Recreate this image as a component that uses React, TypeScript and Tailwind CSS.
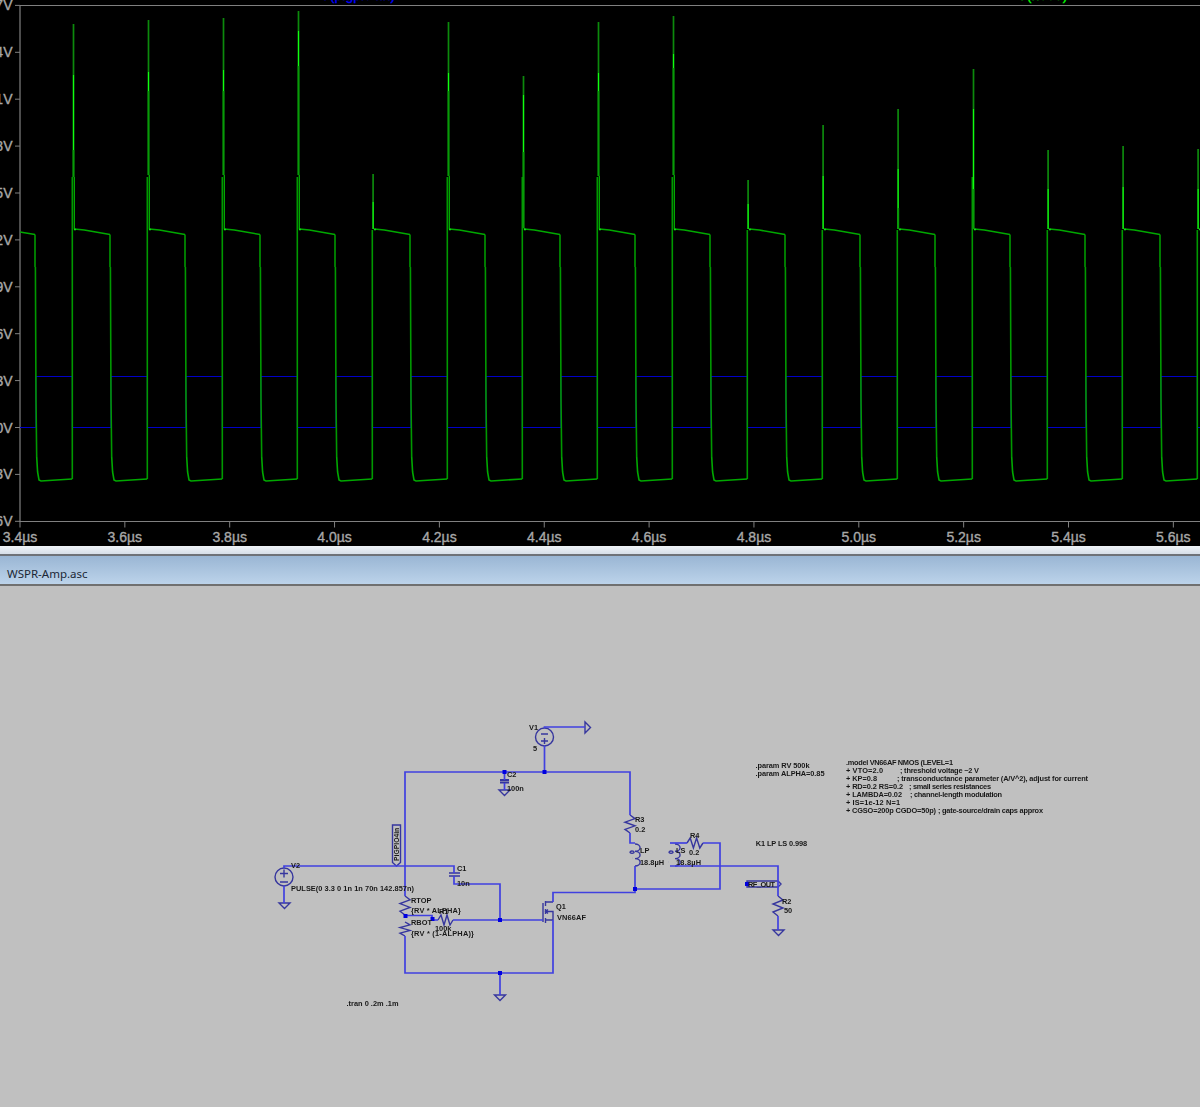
import React from "react";

const FONT = "'Liberation Sans', Arial, sans-serif";
const spikes: [number, number, number, number][] = [
  [24, 75, 150, 177], [20, 72, 91, 175], [18, 70, 91, 175], [11, 31, 66, 175],
  [174, 202, 229, 229], [22, 73, 91, 176], [76, 95, 152, 228], [22, 73, 91, 176],
  [16, 54, 68, 175], [180, 204, 229, 229], [125, 176, 229, 229], [109, 169, 208, 229],
  [69, 109, 189, 229], [150, 189, 229, 229], [146, 187, 229, 229], [149, 189, 229, 229],
];
const yLabels = ["27V", "24V", "21V", "18V", "15V", "12V", "9V", "6V", "3V", "0V", "-3V", "-6V"];
const xLabels = ["3.4µs", "3.6µs", "3.8µs", "4.0µs", "4.2µs", "4.4µs", "4.6µs", "4.8µs", "5.0µs", "5.2µs", "5.4µs", "5.6µs"];

function Waveform() {
  const X0 = 72.3;
  const P = 75;
  const blue: string[] = [];
  const green: string[] = [];
  const low: string[] = [];
  const rise: string[] = [];
  blue.push(`M20 427.5H${X0 - P + 37.7 + 0.9}`);
  green.push(`M20 232L35 234.5`);
  for (let i = -1; i < 16; i++) {
    const r = X0 + P * i;
    const f = r + 37.7;
    if (i >= 0) {
      blue.push(`M${r} 376.5V427.5H${f + 0.9}`);
      green.push(`M${r + 2} 229L${r + 12} 230L${f} 234.5`);
      const big = spikes[i][0] < 100;
      rise.push(`M${r} 479V${big ? 177 : 230}`);
    }
    blue.push(`M${f + 0.9} 427.5V376.5H${f + P - 37.7}`);
    low.push(`M${f} 234.5V267`);
    rise.push(`M${f + 0.4} 267L${f + 1} 400L${f + 1.7} 457`);
    green.push(`M${f + 1.7} 457L${f + 2.6} 472L${f + 4} 480L${f + 6} 481L${f + 37.2} 479`);
  }
  return (
    <>
      <path d={blue.join("")} stroke="#0000c8" strokeWidth="1" fill="none" />
      <path d={rise.join("")} stroke="#009800" strokeWidth="1.6" fill="none" />
      <path d={low.join("")} stroke="#008000" strokeWidth="1.9" fill="none" />
      <path d={green.join("")} stroke="#00a800" strokeWidth="1.6" fill="none" />
      {spikes.map((s, i) => {
        const r = X0 + P * i;
        const big = s[0] < 100;
        const x = r + (big ? 1.2 : 0.8);
        return (
          <g key={i} fill="none">
            <path d={`M${x} ${s[0]}V${s[1]}`} stroke="#0c8a0c" strokeWidth="1.7" />
            <path d={`M${x} ${s[1]}V${s[2]}`} stroke="#10ff10" strokeWidth="1.5" />
            {s[3] > s[2] && <path d={`M${x} ${s[2]}V${s[3]}`} stroke="#089a08" strokeWidth="2.2" />}
            {s[3] < 229 && <path d={`M${x + 0.8} ${s[3]}V229`} stroke="#00b000" strokeWidth="1.3" />}
            <path d={`M${r + 1.6} 229.5h2`} stroke="#10e010" strokeWidth="1.6" />
          </g>
        );
      })}
    </>
  );
}

function PlotPanel() {
  return (
    <svg viewBox="0 0 1200 546" className="block w-[1200px] h-[546px] shrink-0 bg-black">
      <path d="M20 5.5H1200M20 5.5V521.5H1200" stroke="#808080" strokeWidth="1.2" fill="none" />
      <g fontFamily={FONT} fontSize="14" fill="#a8a8a8" stroke="#a8a8a8" strokeWidth="0.35">
        {yLabels.map((t, i) => {
          const y = 5.4 + 46.9 * i;
          return (
            <g key={t}>
              <path d={`M15 ${y}H20`} stroke="#808080" strokeWidth="1" />
              <text x="12.5" y={y + 5} textAnchor="end">{t}</text>
            </g>
          );
        })}
        {xLabels.map((t, i) => {
          const x = 20 + 104.85 * i;
          return (
            <g key={t}>
              <path d={`M${x} 521V527.5`} stroke="#808080" strokeWidth="1" />
              <text x={x} y="542" textAnchor="middle">{t}</text>
            </g>
          );
        })}
      </g>
      <text x="320.5" y="0.3" fontFamily={FONT} fontSize="14" fill="#0000ff" stroke="#0000ff" strokeWidth="0.3">V(pigpio4in)</text>
      <text x="1017.5" y="0.3" fontFamily={FONT} fontSize="14" fill="#00ff00" stroke="#00ff00" strokeWidth="0.3">V(n003)</text>
      <Waveform />
    </svg>
  );
}

const WIRE = "#4040e0";
const PART = "#36369e";

function zigV(x: number, y1: number, y2: number) {
  const n = 5;
  const step = (y2 - y1) / n;
  let d = `M${x} ${y1}`;
  for (let i = 0; i < n; i++) {
    const xx = i === n - 1 ? x : i % 2 === 0 ? x + 5 : x - 5;
    d += `L${xx} ${y1 + step * (i + 1)}`;
  }
  return d;
}
function zigH(y: number, x1: number, x2: number) {
  const n = 5;
  const step = (x2 - x1) / n;
  let d = `M${x1} ${y}`;
  for (let i = 0; i < n; i++) {
    const yy = i === n - 1 ? y : i % 2 === 0 ? y - 5 : y + 5;
    d += `L${x1 + step * (i + 1)} ${yy}`;
  }
  return d;
}
function coil(x: number, y: number) {
  return `M${x} ${y}a5 3.6 0 0 1 0 7.3a5 3.6 0 0 1 0 7.3a5 3.6 0 0 1 0 7.4`;
}

const wires = [
  "M405 896V772H630V815",
  "M630 833V843H635",
  "M635 866V892.5H553V902",
  "M635 889H720V843H703",
  "M687 843H675",
  "M670 843H675",
  "M670 866H778V896",
  "M778 916V930",
  "M544.5 728V727H585",
  "M544.5 746V772",
  "M504.5 772V780",
  "M504.5 783V790",
  "M284 868V866H454V873",
  "M454 876V884H500V920",
  "M284 886V903",
  "M405 915.5H432V920H438",
  "M453 920H543",
  "M405 936V973H553V920",
  "M500 973V995",
];
const dots: [number, number][] = [
  [544.5, 772], [504.5, 772], [635, 889], [500, 920], [500, 973], [405.5, 916], [432.5, 919], [747, 884],
];
const grounds: [number, number][] = [[504.5, 790], [284.5, 903], [778.5, 930], [500, 995]];

type Label = [string, number, number, number?];
const labels: Label[] = [
  ["V1", 529, 730], ["5", 533, 751], ["C2", 507, 777], ["100n", 507, 791],
  [".param RV 500k", 755.5, 767.5, 54], [".param ALPHA=0.85", 755.5, 775.5, 69],
  [".model VN66AF NMOS (LEVEL=1", 846, 764.5, 107],
  ["+ VTO=2.0", 846, 772.7, 37], ["; threshold voltage ~2 V", 900, 772.7, 79],
  ["+ KP=0.8", 846, 780.7, 31], ["; transconductance parameter (A/V^2), adjust for current", 897, 780.7, 191],
  ["+ RD=0.2 RS=0.2", 846, 788.7, 57], ["; small series resistances", 909, 788.7, 82],
  ["+ LAMBDA=0.02", 846, 796.7, 56], ["; channel-length modulation", 910, 796.7, 92],
  ["+ IS=1e-12 N=1", 846, 804.5, 54],
  ["+ CGSO=200p CGDO=50p)", 846, 812.5, 90], ["; gate-source/drain caps approx", 938, 812.5, 105],
  ["K1 LP LS 0.998", 755.7, 845.5, 51.5],
  ["R4", 690, 838], ["0.2", 689, 855], ["LP", 640, 852.5], ["18.8µH", 640, 864.5, 24],
  ["LS", 676, 852.5], ["18.8µH", 676, 864.5, 25], ["R3", 635, 822], ["0.2", 635, 831.5],
  ["RF_OUT", 748, 887, 27], ["R2", 782, 903.5], ["50", 784, 912.5],
  ["Q1", 556, 909], ["VN66AF", 557, 919.5, 29], ["V2", 291, 868], ["C1", 457, 871], ["10n", 457, 886],
  ["PULSE(0 3.3 0 1n 1n 70n 142.857n)", 291, 891, 123],
  ["RTOP", 411, 903], ["{RV * ALPHA}", 411, 913, 50], ["R1", 439, 914], ["100k", 435, 930.5],
  ["RBOT", 411, 925], ["{RV * (1-ALPHA)}", 411, 935.5, 63],
  [".tran 0 .2m .1m", 346.5, 1005.5, 52],
];

function Schematic() {
  return (
    <svg viewBox="0 586 1200 521" className="block w-[1200px] h-[521px] blur-[0.4px]">
      <g fill="none" stroke={PART} strokeWidth="1.4">
        <circle cx="544.5" cy="737" r="9" />
        <circle cx="284" cy="877" r="9" />
        <path d="M541 734H548M541 741H548M544.5 738V744" />
        <path d="M280 873.5H288M284 869.5V877.5M280 882H288" />
        <path d={zigV(630, 815, 833)} />
        <path d={zigV(778, 896, 916)} />
        <path d={zigV(405, 896, 915)} />
        <path d={zigV(405, 922, 936)} />
        <path d={zigH(920, 438, 453)} />
        <path d={zigH(843, 687, 703)} />
        <path d={coil(635, 844)} />
        <path d={coil(675, 844)} />
        <path d="M632 851a2 1.2 0 1 0 0.1 0M632 858h.1M671 851a2 1.2 0 1 0 0.1 0M668 862h.1" />
        <path d="M500 780H509M500 782.5H509" strokeWidth="1.8" />
        <path d="M449 873H460M449 876H460" strokeWidth="1.5" />
        <path d="M543 903V922M545.5 901V906M545.5 909V914M545.5 918V923M545.5 902H553M545.5 920H553M545.5 911.5H553V920M548 909.5L545.5 911.5L548 913.5" />
        <path d="M585 722V733L590.5 727.5Z" />
        {grounds.map(([x, y]) => (
          <path key={`${x}-${y}`} d={`M${x - 5.5} ${y}H${x + 5.5}L${x} ${y + 5.5}Z`} />
        ))}
        <path d="M392.5 825H400.5V862.5L396.5 866L392.5 862.5Z" />
        <path d="M747 881H778L781 884L778 887H747Z" />
      </g>
      <g fill="none" stroke={WIRE} strokeWidth="1.7">
        {wires.map((d) => <path key={d} d={d} />)}
      </g>
      <g fill="#0000e0">
        {dots.map(([x, y]) => <rect key={`${x}-${y}`} x={x - 2} y={y - 2} width="4" height="4" />)}
      </g>
      <g fontFamily={FONT} fontSize="7.4" fontWeight="700" fill="#181818">
        {labels.map(([t, x, y, w]) => (
          <text key={`${t}-${x}-${y}`} x={x} y={y} {...(w ? { textLength: w, lengthAdjust: "spacing" as const } : {})}>
            {t}
          </text>
        ))}
        <text transform="translate(399 861)  rotate(-90)" fontSize="6.8">PiGPIO4in</text>
      </g>
    </svg>
  );
}

export default function App() {
  return (
    <div className="flex flex-col w-[1200px] h-[1107px] overflow-hidden bg-[#c0c0c0]">
      <PlotPanel />
      <div className="h-[8px] shrink-0 bg-gradient-to-b from-[#f0f4f8] to-[#d6dee8]" />
      <div className="h-[32px] shrink-0 flex items-center pl-[7px] pt-[7px] border-t-2 border-b-2 border-t-[#6e7278] border-b-[#707070] bg-gradient-to-b from-[#9ab6d4] to-[#bcd3ea]">
        <span className="font-['Noto_Sans',sans-serif] text-[11.5px] text-[#1c2836]">WSPR-Amp.asc</span>
      </div>
      <Schematic />
    </div>
  );
}
